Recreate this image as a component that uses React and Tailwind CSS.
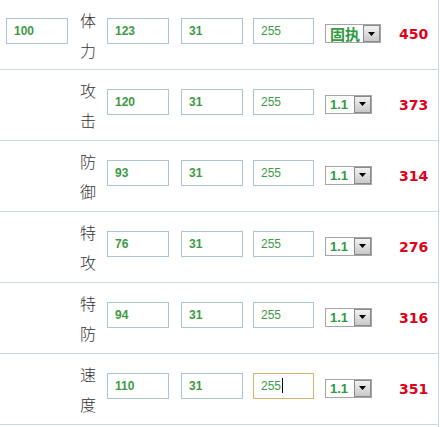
import React from "react";

const rows = [
  { label: ["体", "力"], base: "100", iv: "123", ev: "31", lvl: "255", nat: "固执", total: "450" },
  { label: ["攻", "击"], iv: "120", ev: "31", lvl: "255", nat: "1.1", total: "373" },
  { label: ["防", "御"], iv: "93", ev: "31", lvl: "255", nat: "1.1", total: "314" },
  { label: ["特", "攻"], iv: "76", ev: "31", lvl: "255", nat: "1.1", total: "276" },
  { label: ["特", "防"], iv: "94", ev: "31", lvl: "255", nat: "1.1", total: "316" },
  { label: ["速", "度"], iv: "110", ev: "31", lvl: "255", nat: "1.1", total: "351", focus: true },
];

function Box({ value, bold = true, w = "w-[62px]", focus = false }) {
  return (
    <div
      className={`${w} h-[26px] mb-[7px] flex-none flex items-center pl-[7px] border bg-white ${
        focus ? "border-[#d6b46c]" : "border-[#aac4d4]"
      } text-[12px] text-[#3d9a45] ${bold ? "font-bold" : "font-normal"}`}
      style={{ fontFamily: '"Liberation Sans", Arial, sans-serif' }}
    >
      <span>{value}</span>
      {focus && <span className="w-px h-[15px] bg-black ml-[1px]" />}
    </div>
  );
}

function Select({ text }) {
  const wide = text !== "1.1";
  return (
    <div
      className={`${wide ? "w-[56px]" : "w-[47px]"} h-[19px] mb-[2px] flex-none flex items-center border border-[#a5a5a5] bg-white`}
    >
      <div
        className={`flex-1 pl-[4px] font-bold text-[#2f9a3f] leading-none ${
          wide ? "text-[15px]" : "text-[13px]"
        }`}
        style={{
          fontFamily: wide
            ? '"Noto Sans CJK SC", sans-serif'
            : '"Liberation Sans", Arial, sans-serif',
        }}
      >
        {text}
      </div>
      <div className="w-[17px] h-[17px] flex-none flex items-center justify-center border border-[#8a8a8a] bg-gradient-to-b from-[#f2f2f2] to-[#c9c9c9]">
        <svg width="7" height="4" viewBox="0 0 7 4">
          <path d="M0 0 H7 L3.5 4 Z" fill="#000" />
        </svg>
      </div>
    </div>
  );
}

export default function App() {
  return (
    <div className="w-[440px] h-[427px] bg-white">
      <div className="w-[439px] h-[427px] border-r border-[#c9d6e3]">
        {rows.map((r, i) => (
          <div
            key={i}
            className={`${i === 0 ? "h-[70px]" : "h-[71px]"} flex items-center pl-[6px] border-b border-[#c9d6e3]`}
          >
            <div className="w-[62px] flex-none flex items-center">
              {r.base && <Box value={r.base} />}
            </div>
            <div
              className="w-[39px] flex-none flex flex-col items-center text-[16px] leading-[30px] text-[#333] font-light pl-[1px]"
              style={{ fontFamily: '"Noto Sans CJK SC", sans-serif' }}
            >
              <span>{r.label[0]}</span>
              <span>{r.label[1]}</span>
            </div>
            <Box value={r.iv} />
            <div className="w-[12px] flex-none" />
            <Box value={r.ev} />
            <div className="w-[10px] flex-none" />
            <Box value={r.lvl} bold={false} w="w-[61px]" focus={r.focus} />
            <div className="w-[11px] flex-none" />
            <Select text={r.nat} />
            <div
              className="ml-auto w-[39px] text-left text-[14px] font-bold text-[#e0001b]"
              style={{ fontFamily: '"DejaVu Sans", Verdana, sans-serif' }}
            >
              {r.total}
            </div>
          </div>
        ))}
      </div>
    </div>
  );
}
